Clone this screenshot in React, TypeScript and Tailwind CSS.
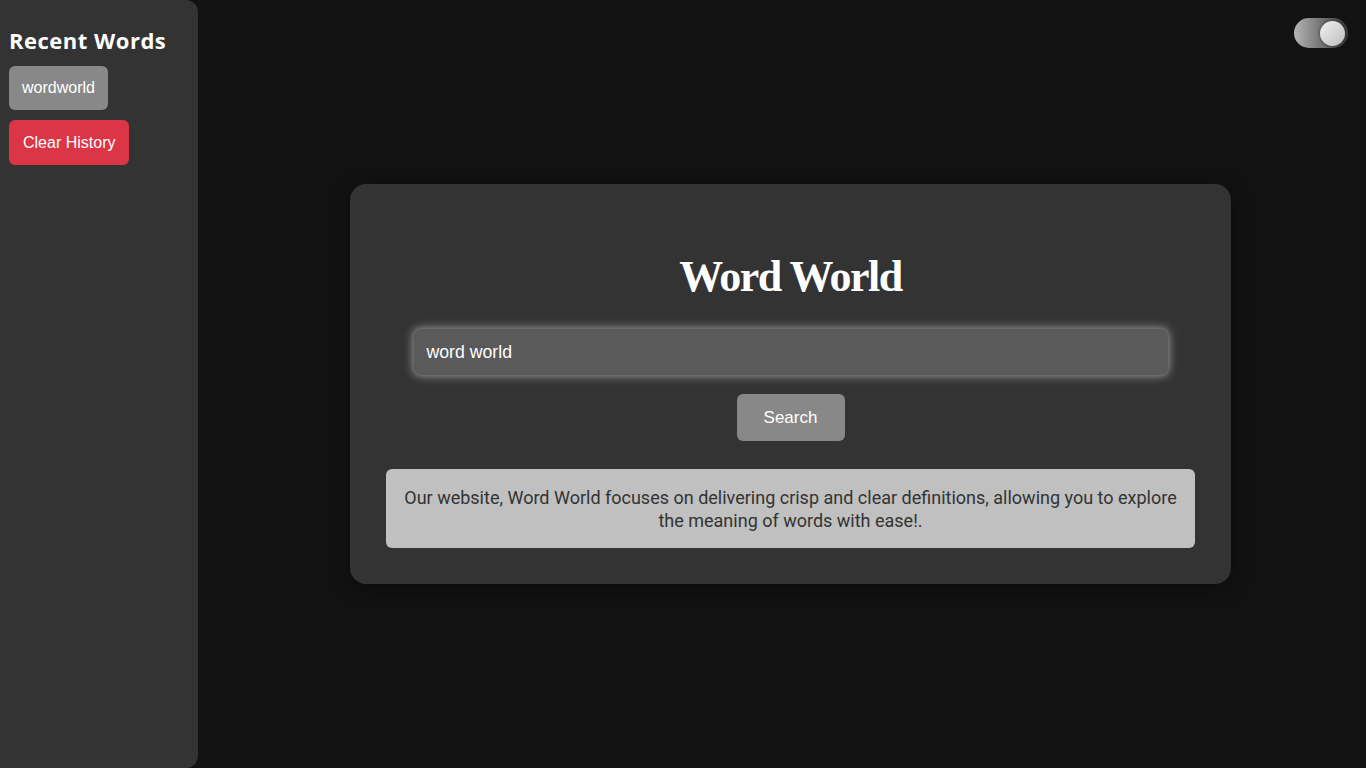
import React from "react";

export default function App() {
  return (
    <div className="flex h-[768px] w-[1366px] overflow-hidden bg-[#121212]" style={{ fontFamily: "'Liberation Sans', Arial, sans-serif" }}>
      <aside className="flex h-full w-[198px] shrink-0 flex-col items-start rounded-r-[12px] bg-[#333333] px-[9px] pt-[26px]">
        <h2 className="text-[22px] font-bold leading-[28px] tracking-[0.5px] text-white" style={{ fontFamily: "'Open Sans', sans-serif" }}>Recent Words</h2>
        <button className="mt-[12px] h-[44px] rounded-[6px] bg-[#888888] px-[13px] text-[16px] text-white">wordworld</button>
        <button className="mt-[10px] h-[45px] rounded-[6px] bg-[#dc3545] px-[14px] text-[16px] text-white">Clear History</button>
      </aside>
      <main className="relative flex flex-1 items-center pl-[152px]">
        <div className="absolute right-[18px] top-[18px] flex h-[30px] w-[54px] items-center justify-end rounded-full bg-gradient-to-r from-[#b5b5b5] to-[#3a3a3a] pr-[3px]">
          <div className="h-[25px] w-[25px] rounded-full bg-gradient-to-br from-[#f2f2f2] to-[#bdbdbd] shadow-[0_0_3px_rgba(0,0,0,0.6)]" />
        </div>
        <div className="flex h-[400px] w-[881px] flex-col items-center rounded-[16px] bg-[#333333] px-[36px] pt-[67px] shadow-[0_4px_20px_rgba(0,0,0,0.4)]">
          <h1 className="text-[44px] font-bold leading-[52px] tracking-[-1.5px] text-white" style={{ fontFamily: "'Liberation Serif', 'DejaVu Serif', serif" }}>Word World</h1>
          <div className="mt-[25px] flex h-[48px] w-[756px] items-center rounded-[8px] border border-[#6a6a6a] bg-[#5a5a5a] px-[13px] text-[17.7px] text-white shadow-[0_0_10px_rgba(255,255,255,0.5)]">word world</div>
          <button className="mt-[18px] h-[47px] w-[108px] rounded-[6px] bg-[#888888] text-[17px] text-white">Search</button>
          <div className="mt-[28px] flex h-[79px] w-full flex-col items-center justify-center rounded-[6px] bg-[#c0c0c0] px-[16px] text-center text-[18px] leading-[23px] text-[#333333]" style={{ fontFamily: "Roboto, sans-serif" }}>
            <p>Our website, Word World focuses on delivering crisp and clear definitions, allowing you to explore the meaning of words with ease!.</p>
          </div>
        </div>
      </main>
    </div>
  );
}
